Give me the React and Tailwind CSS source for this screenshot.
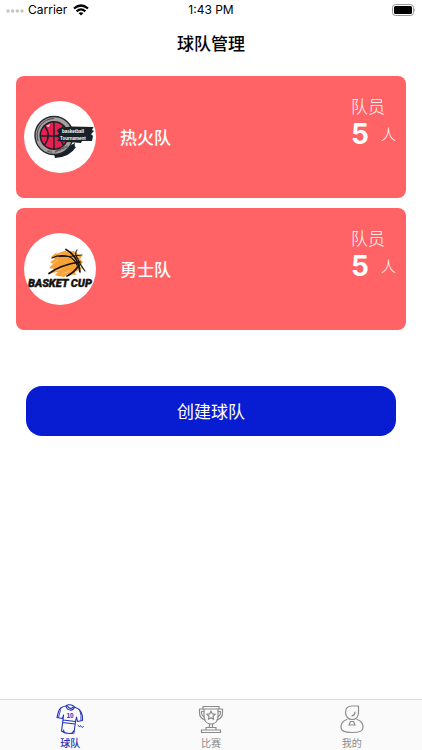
import React from "react";

function HeatLogo() {
  return (
    <svg viewBox="0 0 72 72" className="size-full" role="img" aria-label="basketball Tournament">
      <path d="M30 53 Q41 52 47 44 L51 42 Q50 46 52 46 Q46 56 31 57 Z" fill="#182028" />
      <circle cx="30" cy="34.5" r="19" fill="#a8a09e" stroke="#232a31" strokeWidth="1.4" />
      <path d="M14 40 A17 17 0 0 1 30 17.500" fill="none" stroke="#3a3d42" strokeWidth="0.900" />
      <circle cx="30" cy="34.500" r="14.500" fill="#182028" />
      <circle cx="30" cy="34.500" r="13" fill="#e8204f" />
      <g fill="none" stroke="#182028" strokeWidth="1.400">
        <path d="M30 21 V48 M17 35 H43" />
        <path d="M20.500 25 Q28 34 20.500 44 M39.500 25 Q32 34 39.500 44" />
      </g>
      <path d="M22 25 L26 23 L25 26 Z" fill="#ffd9e0" />
      <path d="M33 29 L36 27 L47 25.500 L69.500 26 L68 29 L70 30 L67 33 L69 35 L68 40 L58 40 L57 42 L44 41 L33 40 L35 37 L31 35 L35 33 Z" fill="#182028" />
      <g fill="#ffffff" fontFamily="'Liberation Sans', Arial, sans-serif" fontWeight="700">
        <text x="38" y="32" fontSize="4.500">basketball</text>
        <text x="36" y="38.500" fontSize="4.500">Tournament</text>
      </g>
      <g fill="#252a30" fontSize="2.800" fontWeight="700" fontFamily="'Liberation Sans', Arial, sans-serif">
        <text transform="translate(23 51) rotate(8)">3X3</text>
        <text transform="translate(31 52) rotate(-25)">APRENDIZ</text>
      </g>
    </svg>
  );
}

function WarriorsLogo() {
  return (
    <svg viewBox="0 0 72 72" className="size-full" role="img" aria-label="BASKET CUP">
      <path
        d="M27 24 L33 19 L32 21 L43 17 L42 19 L50 18 L54 21 L58 23 L56 26 L59 29 L56 33 L58 36 L51 39 L52 42 L44 41 L40 44 L34 43 L31 42 L34 39 L27 40 L30 36 L25 35 L29 31 L26 29 L31 26 Z"
        fill="#f7a236"
      />
      <g fill="none" stroke="#fbd09a" strokeWidth="0.700">
        <path d="M29 25 L38 21 M28 31 L34 27 M38 41 L46 38 M50 21 L56 25 M31 38 L38 36" />
      </g>
      <g fill="none" stroke="#15110e" strokeLinecap="round">
        <path d="M28 25 Q36 21 46 24 Q51 27 53 32" strokeWidth="1.200" />
        <path d="M25 40.500 Q36 32 56 29" strokeWidth="1.700" />
        <path d="M42 16.500 Q54 23 56 39" strokeWidth="1.700" />
        <path d="M35 23.500 Q48 24 58 22" strokeWidth="0.900" />
        <path d="M53 17 Q50 21 54 26 Q55 30 61 38" strokeWidth="1.100" />
        <path d="M43 43 Q50 40 55 32" strokeWidth="1.700" />
      </g>
      <text
        x="4"
        y="53.500"
        fill="#15110e"
        stroke="#15110e"
        strokeWidth="0.400"
        fontSize="11"
        fontWeight="900"
        fontStyle="italic"
        fontFamily="Roboto, 'Liberation Sans', sans-serif"
      >
        BASKET CUP
      </text>
    </svg>
  );
}

const teams = [
  { name: "热火队", count: 5, Logo: HeatLogo },
  { name: "勇士队", count: 5, Logo: WarriorsLogo },
];

function StatusBar() {
  return (
    <div className="grid h-5 grid-cols-3 items-center px-1.5 font-[Inter,'Liberation_Sans',sans-serif] text-xs text-black">
      <div className="flex items-center gap-1">
        <svg viewBox="0 0 18 6" className="h-1.5 w-[18px]" fill="#c4c4c4" aria-hidden="true">
          <circle cx="2" cy="4" r="1.700" />
          <circle cx="6.700" cy="4" r="1.700" />
          <circle cx="11.300" cy="4" r="1.700" />
          <circle cx="16" cy="4" r="1.700" />
        </svg>
        <span>Carrier</span>
        <svg viewBox="0 0 16 12" className="ml-0.5 h-3 w-4" fill="none" stroke="#000" strokeWidth="2.200" aria-hidden="true">
          <path d="M1 4.500 Q8 -1.500 15 4.500" />
          <path d="M3.600 7.300 Q8 3.600 12.400 7.300" />
          <path d="M8 11.500 L5.500 9.100 Q8 7.200 10.500 9.100 Z" fill="#000" stroke="none" />
        </svg>
      </div>
      <span className="text-center">1:43 PM</span>
      <svg viewBox="0 0 26 12" className="h-3 w-[26px] justify-self-end" aria-hidden="true">
        <rect x="2.500" y="0.500" width="21" height="11" rx="3" fill="none" stroke="#999" />
        <rect x="4" y="2" width="18" height="8" rx="1.500" fill="#000" />
        <path d="M24.500 4 Q26 6 24.500 8 Z" fill="#888" />
      </svg>
    </div>
  );
}

function TeamCard({ name, count, Logo }) {
  return (
    <li className="flex h-[122px] items-center rounded-lg bg-[#ff6365] pl-2 text-white">
      <div className="size-[72px] shrink-0 overflow-hidden rounded-full bg-white">
        <Logo />
      </div>
      <h2 className="ml-6 flex-1 text-[17px] leading-6 font-medium">{name}</h2>
      <div className="w-[55px] self-start pt-[18px]">
        <p className="text-[17px] leading-6 font-light">队员</p>
        <p className="flex items-center gap-3 leading-8">
          <span className="font-[Inter,sans-serif] text-[28px] font-bold">{count}</span>
          <span className="text-[15px] font-light">人</span>
        </p>
      </div>
    </li>
  );
}

function JerseyIcon() {
  return (
    <svg viewBox="0 0 32 32" className="size-8" fill="none" stroke="currentColor" strokeWidth="1.100" strokeLinejoin="round" strokeLinecap="round" aria-hidden="true">
      <path d="M12 3 C8 3.500 5.500 5.500 4.500 8.500 L3 14.500 L8.500 15.500 L9.500 12 L9 17 L21.500 18.500 L22.500 14 L23.500 18.500 L28.500 17.500 C29 11 26.500 6 20.500 4 C18.500 1.500 14 1 12 3 Z" />
      <path d="M12 3 C13 8 19 8.500 20.500 4 M13.500 3 C15 6 18 6 19 4" />
      <path d="M6.500 7 L4.500 14.500 M26 8 Q27.500 12 27 17.500" strokeWidth="0.900" />
      <path d="M9 17 L7.500 28 C10.500 30.500 15 31 20 30 L21.500 18.500 M8.500 19.500 L21 21 M9.500 27 Q9.500 29 11.500 30 M20 27.500 L18 30" />
      <path d="M24 22 L25.500 24 L26.500 22.500 L28 24.500 L29.500 23.500" strokeWidth="0.900" />
      <text x="12.500" y="15" fontSize="6.500" fontWeight="700" fill="currentColor" stroke="none" fontFamily="'Liberation Sans', sans-serif">10</text>
    </svg>
  );
}

function TrophyIcon() {
  return (
    <svg viewBox="0 0 32 32" className="size-8" fill="none" stroke="currentColor" strokeWidth="1.200" strokeLinejoin="round" aria-hidden="true">
      <path d="M8 3.500 H24 V6 H8 Z" />
      <path d="M9 6 V13 C9 18 12 21 16 21 C20 21 23 18 23 13 V6" />
      <path d="M8 6 H4.500 V10 C4.500 14 7 16 10.500 17 M24 6 H27.500 V10 C27.500 14 25 16 21.500 17" />
      <path d="M9 8.500 H6.500 V10 C6.500 12 7.500 13 9 14 M23 8.500 H25.500 V10 C25.500 12 24.500 13 23 14" />
      <path d="M16 8 L17.300 10.800 L20.200 11.200 L18 13.300 L18.600 16.300 L16 14.900 L13.400 16.300 L14 13.300 L11.800 11.200 L14.700 10.800 Z" />
      <path d="M14.500 21 V24.500 M17.500 21 V24.500 M11 27 V24.500 H21 V27 M6.500 27 H25.500 V29.500 H6.500 Z" />
    </svg>
  );
}

function ProfileIcon() {
  return (
    <svg viewBox="0 0 32 32" className="size-8" fill="none" stroke="currentColor" strokeWidth="1.200" strokeLinejoin="round" strokeLinecap="round" aria-hidden="true">
      <path d="M22.500 3 H16 C12 3 9.500 5.500 9.500 9.500 C9.500 13.500 12.500 16.500 16 16.500 C20 16.500 22.500 13.500 22.500 9.500 Z" />
      <path d="M19 9 C19 11 18 12.500 16 12.800" />
      <path d="M11 16.500 C7.500 17.500 5 20.500 5 24.500 C5 28.500 9 29.500 16 29.500 C23 29.500 27 28.500 27 24.500 C27 20.500 24.500 17.500 21 16.500" />
      <path d="M14.500 18.500 H17.500 L19 22 H13 Z" />
    </svg>
  );
}

const tabs = [
  { label: "球队", Icon: JerseyIcon, active: true },
  { label: "比赛", Icon: TrophyIcon },
  { label: "我的", Icon: ProfileIcon },
];

export default function App() {
  return (
    <div className="flex min-h-screen flex-col bg-white font-['Noto_Sans_CJK_SC','Liberation_Sans',sans-serif]">
      <StatusBar />
      <header className="flex h-[46px] items-center justify-center">
        <h1 className="text-[17px] leading-6 font-medium text-black">球队管理</h1>
      </header>
      <main className="flex-1 px-4 pt-2.5">
        <ul className="flex flex-col gap-2.5">
          {teams.map((team) => (
            <TeamCard key={team.name} {...team} />
          ))}
        </ul>
        <div className="px-2.5 pt-14">
          <button type="button" className="h-[50px] w-full rounded-2xl bg-[#081dd1] text-[17px] font-normal text-white">
            创建球队
          </button>
        </div>
      </main>
      <nav className="grid grid-cols-3 border-t border-[#dcdcdc] bg-[#fafafa] pt-[3px]">
        {tabs.map(({ label, Icon, active }) => (
          <a
            key={label}
            href="#"
            aria-current={active ? "page" : undefined}
            className={active ? "flex flex-col items-center font-medium text-[#2433b8]" : "flex flex-col items-center text-[#8c8c8c]"}
          >
            <Icon />
            <span className="text-[10px] leading-[15px]">{label}</span>
          </a>
        ))}
      </nav>
    </div>
  );
}
